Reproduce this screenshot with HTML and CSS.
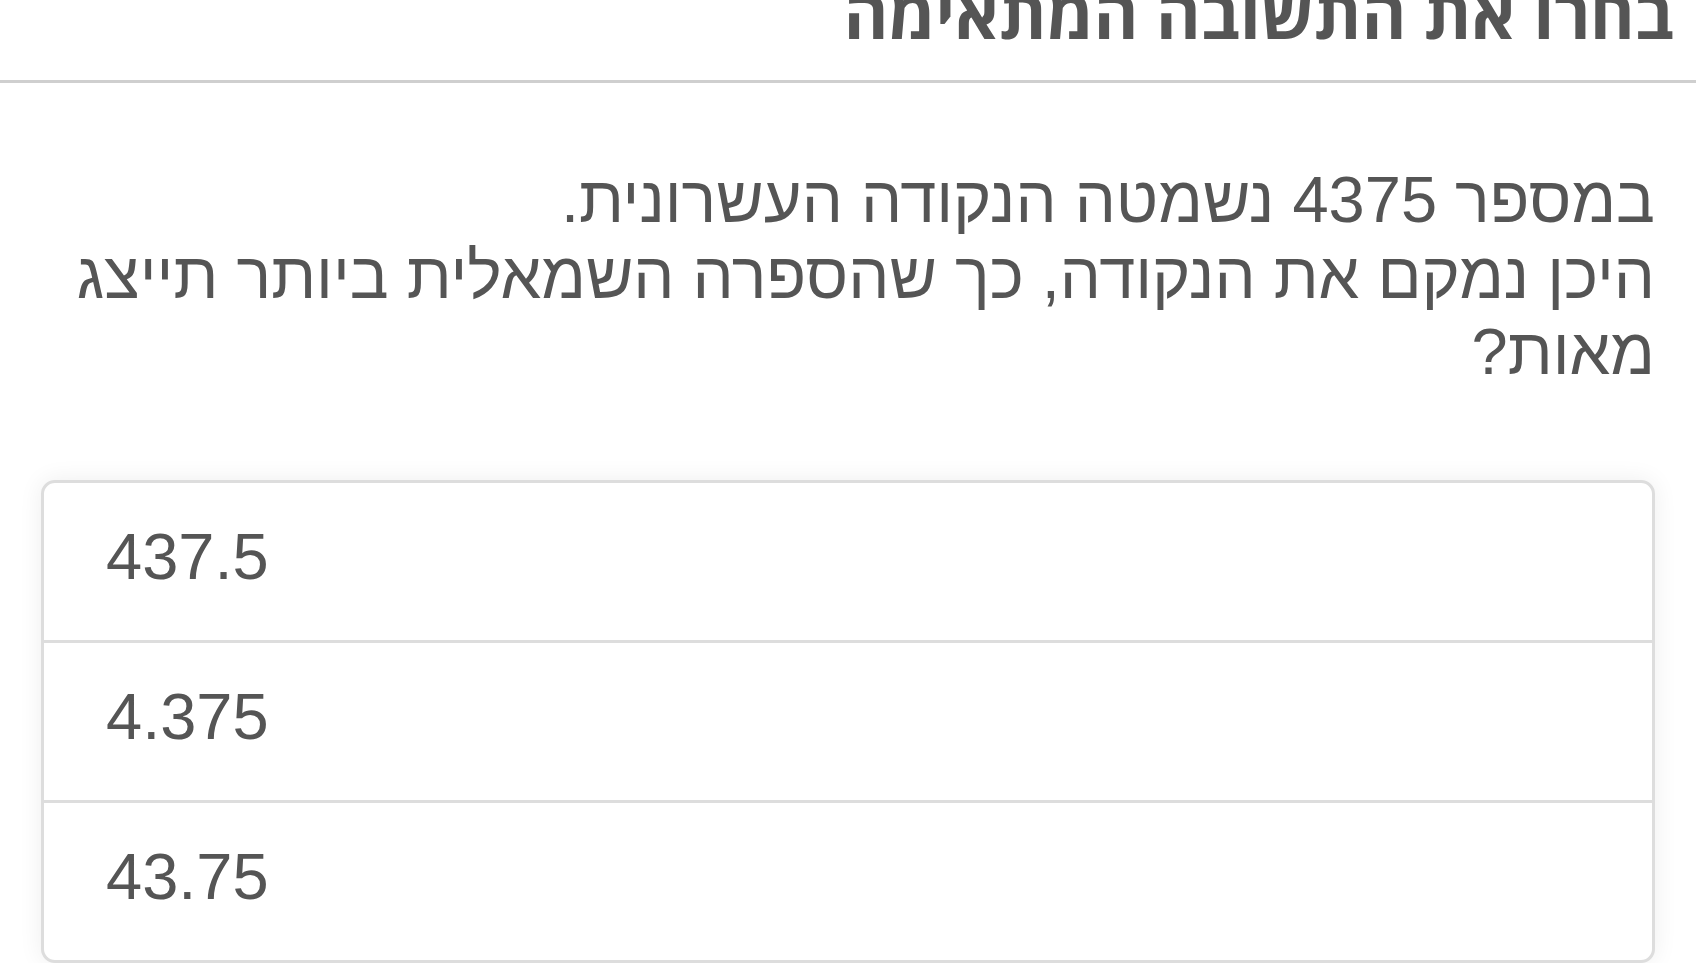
FILE: index.html
```html
<!DOCTYPE html>
<html lang="he" dir="rtl">
<head>
    <meta charset="UTF-8">
    <meta name="viewport" content="width=device-width, initial-scale=1.0">
    <title>בחרו את התשובה המתאימה</title>
    <link rel="stylesheet" href="styles.css">
</head>
<body>

    <div class="header">
        <h1 class="title">בחרו את התשובה המתאימה</h1>
    </div>

    <div class="content">
        <div class="question">
            במספר 4375 נשמטה הנקודה העשרונית.<br>
            היכן נמקם את הנקודה, כך שהספרה השמאלית ביותר תייצג מאות?
        </div>

        <!-- רשימת התשובות -->
        <ul class="answers">
            <li class="answer">437.5</li>
            <li class="answer">4.375</li>
            <li class="answer">43.75</li>
        </ul>
    </div>

</body>
</html>
```

FILE: styles.css
```css
body {
    font-family: "Liberation Sans", Arial, sans-serif;
    margin: 0;
    padding: 0;
    background-color: #fff;
    color: #555;
    overflow: hidden;
}
.header {
    padding: 0 22px 33px;
    border-bottom: 3px solid #cfcfcf;
}
.title {
    margin: -21px 0 0;
    font-family: "Open Sans", "DejaVu Sans Condensed", sans-serif;
    font-weight: 700;
    font-size: 68px;
    line-height: 1;
    color: #555;
}
.content {
    padding: 0 41px 0 41px;
}
.question {
    margin: 79px 0 90px 0;
    font-size: 65px;
    line-height: 76px;
}
.answers {
    list-style: none;
    margin: 0;
    padding: 0;
    direction: ltr;
    border: 3px solid #ddd;
    border-radius: 14px;
    background-color: #fff;
    box-shadow: 0 0 24px rgba(0, 0, 0, 0.07);
}
.answer {
    padding: 37px 62px 46px;
    font-size: 65px;
    line-height: 74px;
    text-align: left;
}
.answer + .answer {
    border-top: 3px solid #ddd;
}
```
